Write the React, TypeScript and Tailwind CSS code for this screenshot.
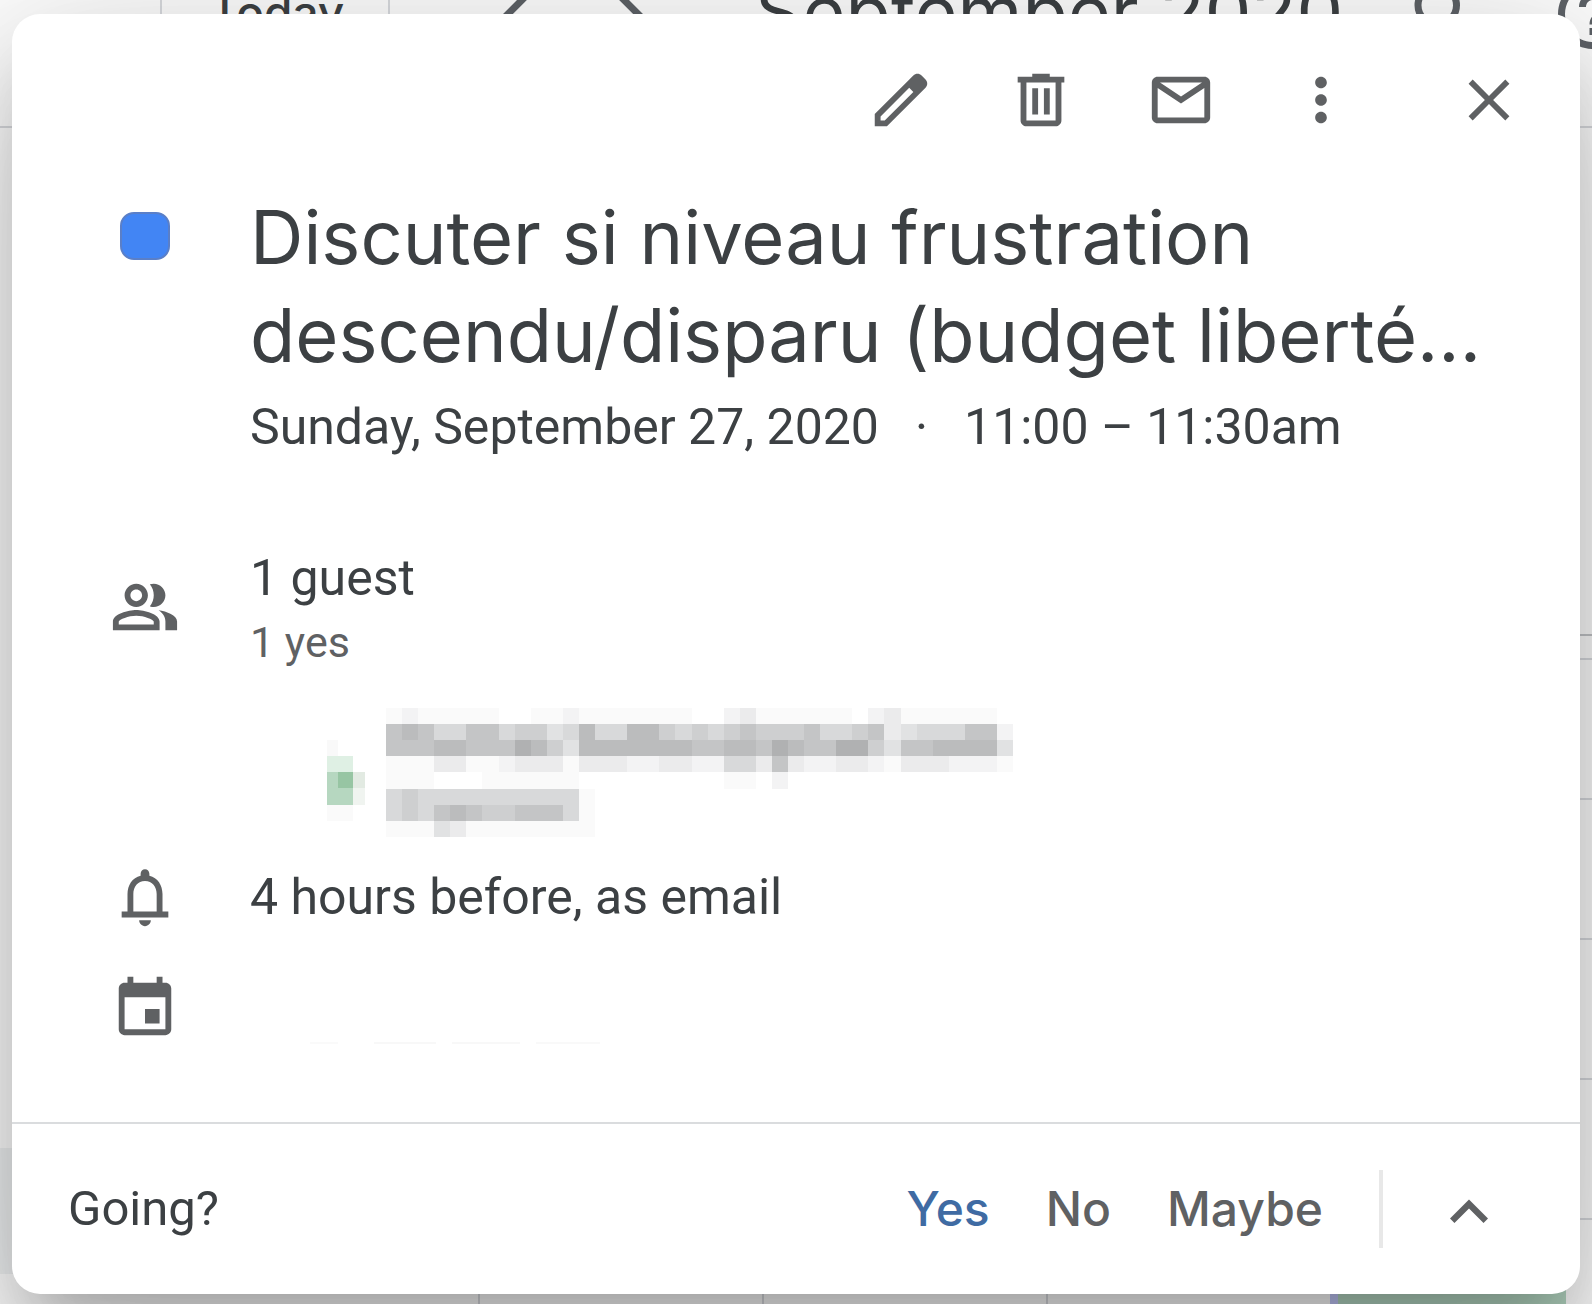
import type { ReactNode } from 'react';

const ICONS = {
  edit: 'M20.41 4.94l-1.35-1.35c-.78-.78-2.05-.78-2.83 0L3 16.82V21h4.18L20.41 7.77c.79-.78.79-2.05 0-2.83zm-14 14.12L5 19v-1.36l9.82-9.82 1.41 1.41-9.82 9.83z',
  trash: 'M15 4V3H9v1H4v2h1v13c0 1.1.9 2 2 2h10c1.1 0 2-.9 2-2V6h1V4h-5zm2 15H7V6h10v13zM9 8h2v9H9zm4 0h2v9h-2z',
  mail: 'M20 4H4c-1.1 0-2 .9-2 2v12c0 1.1.9 2 2 2h16c1.1 0 2-.9 2-2V6c0-1.1-.9-2-2-2zm-.8 2L12 10.8 4.8 6h14.4zM4 18V7.87l8 5.33 8-5.33V18H4z',
  more: 'M12 8c1.1 0 2-.9 2-2s-.9-2-2-2-2 .9-2 2 .9 2 2 2zm0 2c-1.1 0-2 .9-2 2s.9 2 2 2 2-.9 2-2-.9-2-2-2zm0 6c-1.1 0-2 .9-2 2s.9 2 2 2 2-.9 2-2-.9-2-2-2z',
  close: 'M19 6.41L17.59 5 12 10.59 6.41 5 5 6.41 10.59 12 5 17.59 6.41 19 12 13.41 17.59 19 19 17.59 13.41 12z',
  people: 'M15 8c0-1.42-.5-2.73-1.33-3.76.42-.14.86-.24 1.33-.24 2.21 0 4 1.79 4 4s-1.79 4-4 4c-.43 0-.84-.09-1.23-.21-.03-.01-.06-.02-.1-.03A5.98 5.98 0 0 0 15 8zm1.66 5.13C18.03 14.06 19 15.32 19 17v3h4v-3c0-2.18-3.58-3.47-6.34-3.87zM9 6c-1.1 0-2 .9-2 2s.9 2 2 2 2-.9 2-2-.9-2-2-2m0 9c-2.7 0-5.8 1.29-6 2.01V18h12v-1c-.2-.71-3.3-2-6-2M9 4c2.21 0 4 1.79 4 4s-1.79 4-4 4-4-1.79-4-4 1.79-4 4-4zm0 9c2.67 0 8 1.34 8 4v3H1v-3c0-2.66 5.33-4 8-4z',
  bell: 'M18 17v-6c0-3.07-1.63-5.64-4.5-6.32V4c0-.83-.67-1.5-1.5-1.5s-1.5.67-1.5 1.5v.68C7.63 5.36 6 7.92 6 11v6H4v2h16v-2h-2zm-2 0H8v-6c0-2.48 1.51-4.5 4-4.5s4 2.02 4 4.5v6zm-4 5c1.1 0 2-.9 2-2h-4c0 1.1.9 2 2 2z',
  calendar: 'M19 4h-1V2h-2v2H8V2H6v2H5c-1.1 0-2 .9-2 2v14c0 1.1.9 2 2 2h14c1.1 0 2-.9 2-2V6c0-1.1-.9-2-2-2zm0 16H5V9h14v11zm-7-7h5v5h-5z',
  chevronUp: 'M12 9l-6 6 1.41 1.41L12 11.83l4.59 4.58L18 15z',
  chevronLeft: 'M15.41 7.41L14 6l-6 6 6 6 1.41-1.41L10.83 12z',
  chevronRight: 'M10 6L8.59 7.41 13.17 12l-4.58 4.59L10 18l6-6z',
  search: 'M15.5 14h-.79l-.28-.27A6.471 6.471 0 0 0 16 9.5 6.5 6.5 0 1 0 9.5 16c1.61 0 3.09-.59 4.23-1.57l.27.28v.79l5 4.99L20.49 19l-4.99-5zm-6 0C7.01 14 5 11.99 5 9.5S7.01 5 9.5 5 14 7.01 14 9.5 11.99 14 9.5 14z',
  help: 'M11 18h2v-2h-2v2zm1-16C6.48 2 2 6.48 2 12s4.48 10 10 10 10-4.48 10-10S17.52 2 12 2zm0 18c-4.41 0-8-3.59-8-8s3.59-8 8-8 8 3.59 8 8-3.59 8-8 8zm0-14c-2.21 0-4 1.79-4 4h2c0-1.1.9-2 2-2s2 .9 2 2c0 2-3 1.75-3 5h2c0-2.25 3-2.5 3-5 0-2.21-1.79-4-4-4z',
};

type IconName = keyof typeof ICONS;

const Icon = ({ name, className = 'size-[70px]' }: { name: IconName; className?: string }) => (
  <svg viewBox="0 0 24 24" fill="currentColor" className={`shrink-0 ${className}`} aria-hidden="true">
    <path d={ICONS[name]} />
  </svg>
);

const IconButton = ({ name, label }: { name: IconName; label: string }) => (
  <button type="button" aria-label={label} className="flex h-28 w-[140px] items-center justify-center">
    <Icon name={name} />
  </button>
);

// One character per mosaic cell, from lightest (1) to darkest (9)
const MOSAIC = [
  '1211111..1121111111..23111111.23111111.',
  '787557756645855886565676667556734555772',
  '777887779864888888877887987799647788884',
  '111331123331333223322553732233213332221',
  '111...111111.........11.2..............',
  '5655555555551',
  '5657876677751',
  '1114311111111',
];

const SHADES = ['#fff', '#fafafa', '#f3f3f4', '#ebebec', '#e1e2e3', '#d8d9da', '#cecfd0', '#c4c5c6', '#bbbcbd', '#b0b1b2'];

const GuestMosaic = () => (
  <svg viewBox="0 0 686 129" className="h-[129px] w-[686px]" shapeRendering="crispEdges" aria-hidden="true">
    <rect x="0" y="32" width="11" height="16" fill="#f9f9f9" />
    <rect x="0" y="48" width="26" height="16" fill="#dff0e4" />
    <rect x="0" y="64" width="26" height="33" fill="#b6d7c0" />
    <rect x="11" y="64" width="15" height="16" fill="#97c5a3" />
    <rect x="26" y="64" width="12" height="16" fill="#e2eae2" />
    <rect x="26" y="80" width="12" height="17" fill="#f0f4f0" />
    <rect x="0" y="97" width="26" height="16" fill="#fafafa" />
    <g transform="translate(59 0) scale(16.08 16.12)">
      {MOSAIC.map((row, y) =>
        row.split('').map((cell, x) =>
          cell === '.' ? null : <rect key={`${x}-${y}`} x={x} y={y} width="1" height="1" fill={SHADES[Number(cell)]} />
        )
      )}
    </g>
  </svg>
);

const DetailRow = ({ icon, children, className = '' }: { icon: IconName; children?: ReactNode; className?: string }) => (
  <div className={`flex items-center ${className}`}>
    <div className="flex w-[238px] shrink-0 pl-[98px] text-[#5f6163]">
      <Icon name={icon} />
    </div>
    <div className="min-w-0">{children}</div>
  </div>
);

const CalendarBackdrop = () => (
  <div className="absolute inset-0 flex flex-col overflow-hidden bg-white" aria-hidden="true">
    <div className="-mt-[98px] flex h-[226px] shrink-0 items-center border-b-2 border-[#dadce0] pl-40 text-[#5f6368]">
      <div className="flex h-[126px] w-[230px] shrink-0 items-center justify-center rounded-[14px] border-2 border-[#dadce0] pb-1 pl-1 font-['Inter'] text-[46px] font-medium text-[#3c4043]">
        Today
      </div>
      <div className="ml-[71px] flex shrink-0">
        <div className="flex w-28 justify-center"><Icon name="chevronLeft" className="size-[84px]" /></div>
        <div className="flex w-28 justify-center"><Icon name="chevronRight" className="size-[84px]" /></div>
      </div>
      <div className="ml-[70px] shrink-0 pb-1 font-['Inter'] text-[74px] text-[#3c4043]">September 2020</div>
      <div className="-mr-[74px] ml-auto flex shrink-0">
        <div className="flex w-[147px] justify-center"><Icon name="search" className="size-[84px]" /></div>
        <div className="flex w-[147px] justify-center"><Icon name="help" className="size-[84px]" /></div>
      </div>
    </div>
    <div className="flex flex-1">
      <div className="flex w-[195px] shrink-0 flex-col pt-[1020px]">
        <div className="h-[126px] bg-[#f1f3f4]" />
      </div>
      <div className="flex flex-1 flex-col">
        <div className="h-[508px] shrink-0 border-b-2 border-[#c4c6c9]" />
        <div className="h-6 shrink-0 border-b-2 border-[#dadce0]" />
        <div className="h-[140px] shrink-0 border-b-2 border-[#dadce0]" />
        <div className="h-[140px] shrink-0 border-b-2 border-[#dadce0]" />
        <div className="h-[140px] shrink-0 border-b-2 border-[#dadce0]" />
        <div className="h-[140px] shrink-0 border-b-2 border-[#dadce0]" />
        <div className="flex flex-1">
          <div className="w-[285px] border-r-2 border-[#dadce0]" />
          <div className="w-[284px] border-r-2 border-[#dadce0]" />
          <div className="w-[284px] border-r-2 border-[#dadce0]" />
          <div className="w-[282px]" />
          <div className="w-[236px] border-l-8 border-[#c3c9fb] bg-[#b6d9c4]" />
        </div>
      </div>
    </div>
  </div>
);

export default function App() {
  return (
    <div className="relative overflow-hidden px-3 pt-3.5 pb-2.5 font-['Roboto',sans-serif] text-[50px] leading-[70px] text-[#3c4043]">
      <CalendarBackdrop />
      <div
        role="dialog"
        aria-labelledby="event-title"
        className="relative rounded-[28px] bg-white shadow-[0_84px_133px_10px_rgba(0,0,0,0.15),0_31px_161px_28px_rgba(0,0,0,0.14),0_38px_52px_-24px_rgba(0,0,0,0.18)]"
      >
        <div className="flex justify-end pt-[30px] pr-[21px] text-[#5f6163]">
          <IconButton name="edit" label="Edit event" />
          <IconButton name="trash" label="Delete event" />
          <IconButton name="mail" label="Email guests" />
          <IconButton name="more" label="Options" />
          <div className="w-7" />
          <IconButton name="close" label="Close" />
        </div>

        <div className="mt-8 flex">
          <div className="w-[238px] shrink-0 pt-6 pl-[108px]">
            <div className="h-12 w-[50px] rounded-[14px] border-2 border-[#5a7fc8] bg-[#4285f4]" />
          </div>
          <div>
            <h1 id="event-title" className="font-['Inter',sans-serif] text-[74px] leading-[98px]">
              Discuter si niveau frustration
              <br />
              descendu/disparu (budget liberté...
            </h1>
            <p className="mt-2 flex gap-9">
              <span>Sunday, September 27, 2020</span>
              <span>·</span>
              <span>11:00 – 11:30am</span>
            </p>
          </div>
        </div>

        <DetailRow icon="people" className="mt-[81px]">
          <p>1 guest</p>
          <p className="text-[43px] leading-[58px] text-[#5f6163]">1 yes</p>
        </DetailRow>
        <div className="mt-[37px] pl-[315px]">
          <GuestMosaic />
        </div>
        <DetailRow icon="bell" className="mt-[25px]">
          <p>4 hours before, as email</p>
        </DetailRow>
        <DetailRow icon="calendar" className="mt-9">
          <div className="flex gap-4 pt-[74px] pl-[60px]">
            <div className="mr-5 h-0.5 w-7 bg-[#fafafa]" />
            <div className="h-0.5 w-[62px] bg-[#f8f8f8]" />
            <div className="h-0.5 w-[68px] bg-[#f8f8f8]" />
            <div className="h-0.5 w-[64px] bg-[#f9f9f9]" />
          </div>
        </DetailRow>

        <div className="mt-[78px] flex items-center border-t-2 border-[#dadcde] py-[46px] pr-[73px] pl-14">
          <span className="mr-auto text-[49px]">Going?</span>
          <div className="flex gap-14 font-['Inter',sans-serif] text-[48px] font-medium text-[#5f6163]">
            <button type="button" className="text-[#3f6ba3]">Yes</button>
            <button type="button">No</button>
            <button type="button">Maybe</button>
          </div>
          <div className="ml-14 h-[78px] w-1 bg-[#e8e8e8]" />
          <button type="button" aria-label="More options" className="ml-12 text-[#5f6163]">
            <Icon name="chevronUp" className="size-[76px]" />
          </button>
        </div>
      </div>
    </div>
  );
}
